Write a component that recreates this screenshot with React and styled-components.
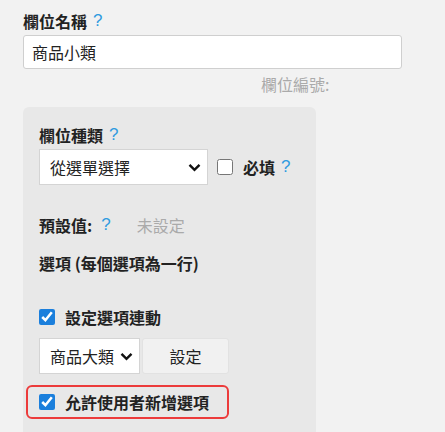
import React, { useState } from "react";
import styled, { createGlobalStyle } from "styled-components";

const GlobalStyle = createGlobalStyle`
  body {
    margin: 0;
    background: #f2f2f2;
    font-family: "Noto Sans CJK TC", "Noto Sans", sans-serif;
    color: #222;
  }
`;

const Page = styled.div`
  padding: 10px 0 0 23px;
  width: 445px;
  height: 432px;
  box-sizing: border-box;
  overflow: hidden;
`;

const Label = styled.div`
  display: flex;
  align-items: center;
  gap: ${(p) => p.$gap || 6}px;
  font-size: 16px;
  font-weight: 700;
  line-height: 22px;
  margin-bottom: ${(p) => p.$mb || 0}px;
`;

const Help = styled.span`
  color: #2f9be0;
  font-weight: 400;
  font-family: "Liberation Sans", sans-serif;
  font-size: 17px;
`;

const TextInput = styled.input`
  display: block;
  width: 379px;
  height: 34px;
  box-sizing: border-box;
  border: 1px solid #cfcfcf;
  border-radius: 3px;
  padding: 0 8px;
  font: inherit;
  font-size: 16px;
  color: #222;
  background: #fff;
  outline: none;
`;

const FieldNo = styled.div`
  padding-left: 238px;
  margin-top: 4px;
  font-size: 16px;
  line-height: 22px;
  color: #aaa;
`;

const Panel = styled.div`
  margin-top: 12px;
  width: 293px;
  background: #e8e8e8;
  border-radius: 6px 6px 0 0;
  padding: 17px 16px 30px;
  box-sizing: border-box;
`;

const Row = styled.div`
  display: flex;
  align-items: center;
  margin-bottom: ${(p) => p.$mb || 0}px;
`;

const SelectWrap = styled.div`
  position: relative;
  width: ${(p) => p.$w}px;
  height: 36px;
  background: #fff;
  border: 1px solid #d4d4d4;
  box-sizing: border-box;
`;

const Select = styled.select`
  appearance: none;
  width: 100%;
  height: 100%;
  border: none;
  background: transparent;
  font: inherit;
  font-size: 16px;
  color: #222;
  padding: 0 10px;
  outline: none;
`;

const Chevron = styled.svg`
  position: absolute;
  right: 6px;
  top: 13px;
  pointer-events: none;
`;

const Check = styled.input`
  width: 16px;
  height: 16px;
  margin: 0;
  accent-color: #1b7fdc;
`;

const CheckText = styled.span`
  font-size: 16px;
  font-weight: 700;
  margin-left: ${(p) => p.$ml || 10}px;
`;

const Muted = styled.span`
  color: #aaa;
  font-weight: 400;
  margin-left: 17px;
`;

const Button = styled.button`
  width: 87px;
  height: 36px;
  margin-left: 2px;
  border: 1px solid #e2e2e2;
  border-radius: 3px;
  background: #f1f1f1;
  font: inherit;
  font-size: 16px;
  color: #222;
`;

const Highlight = styled.div`
  display: flex;
  align-items: center;
  width: 203px;
  height: 34px;
  box-sizing: border-box;
  margin-left: -13px;
  padding-left: 11px;
  border: 2px solid #ec3b3b;
  border-radius: 6px;
`;

function Dropdown({ width, value, options }) {
  return (
    <SelectWrap $w={width}>
      <Select defaultValue={value}>
        {options.map((o) => (
          <option key={o}>{o}</option>
        ))}
      </Select>
      <Chevron width="13" height="9" viewBox="0 0 13 9">
        <path d="M1.5 1.8 L6.5 6.8 L11.5 1.8" fill="none" stroke="#111" strokeWidth="2.4" />
      </Chevron>
    </SelectWrap>
  );
}

export default function App() {
  const [name, setName] = useState("商品小類");
  return (
    <>
      <GlobalStyle />
      <Page>
        <Label $mb={3}>
          欄位名稱 <Help>?</Help>
        </Label>
        <TextInput value={name} onChange={(e) => setName(e.target.value)} />
        <FieldNo>欄位編號:</FieldNo>
        <Panel>
          <Label $mb={3}>
            欄位種類 <Help>?</Help>
          </Label>
          <Row $mb={29}>
            <Dropdown width={169} value="從選單選擇" options={["從選單選擇", "單行文字"]} />
            <Check type="checkbox" style={{ marginLeft: 9 }} />
            <CheckText>必填</CheckText>
            <Help style={{ marginLeft: 6 }}>?</Help>
          </Row>
          <Label $mb={16} $gap={9}>
            預設值: <Help>?</Help>
            <Muted>未設定</Muted>
          </Label>
          <Label $mb={31}>選項 (每個選項為一行)</Label>
          <Row $mb={9}>
            <Check type="checkbox" defaultChecked />
            <CheckText>設定選項連動</CheckText>
          </Row>
          <Row $mb={11}>
            <Dropdown width={101} value="商品大類" options={["商品大類"]} />
            <Button>設定</Button>
          </Row>
          <Highlight>
            <Check type="checkbox" defaultChecked />
            <CheckText>允許使用者新增選項</CheckText>
          </Highlight>
        </Panel>
      </Page>
    </>
  );
}
